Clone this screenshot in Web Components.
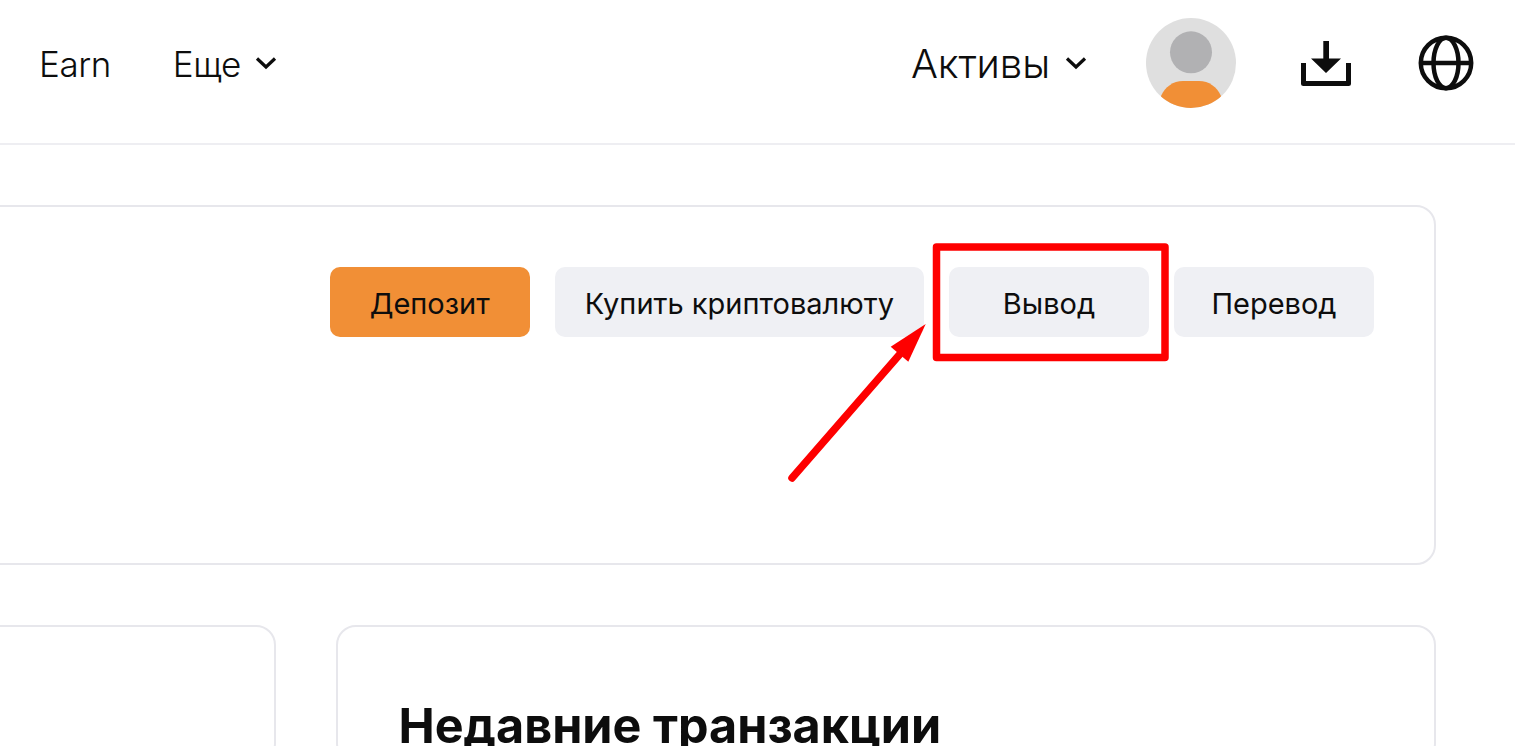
<!DOCTYPE html>
<html lang="ru">
<head>
<meta charset="utf-8">
<title>Вывод</title>
<style>
  html, body { margin: 0; height: 100%; overflow: hidden; background: #fff; }
  body { font-family: Inter, "Noto Sans", sans-serif; color: #0d0d0d; position: relative; }
</style>
</head>
<body>
<app-header>
  <nav-link slot="left" style="margin-right:62px">Earn</nav-link>
  <nav-link slot="left" chevron>Еще</nav-link>
  <nav-link slot="right" chevron large>Активы</nav-link>
  <user-avatar slot="right"></user-avatar>
  <download-icon slot="right"></download-icon>
  <globe-icon slot="right"></globe-icon>
</app-header>
<main-area>
  <panel-card class="top">
    <action-button primary>Депозит</action-button>
    <action-button>Купить криптовалюту</action-button>
    <action-button>Вывод</action-button>
    <action-button>Перевод</action-button>
  </panel-card>
  <two-cols>
    <panel-card></panel-card>
    <panel-card><h-title>Недавние транзакции</h-title></panel-card>
  </two-cols>
</main-area>
<red-annotation></red-annotation>

<script>
function define(name, html) {
  customElements.define(name, class extends HTMLElement {
    constructor() {
      super();
      this.attachShadow({ mode: "open" });
      this.shadowRoot.innerHTML = html;
    }
  });
}

define("app-header", `
  <style>
    :host { display: flex; justify-content: space-between; align-items: center; height: 125px; border-bottom: 2px solid #eeeef2; padding: 0 41px 18px 39px; }
    div { display: flex; align-items: center; }
  </style>
  <div><slot name="left"></slot></div>
  <div><slot name="right"></slot></div>
`);

define("nav-link", `
  <style>
    :host { display: flex; align-items: center; font-size: 35px; font-weight: 350; letter-spacing: -0.45px; line-height: 40px; padding-top: 2px; }
    :host([large]) { font-size: 40px; letter-spacing: -0.1px; margin-right: 59px; }
    svg { display: none; width: 22px; height: 14px; margin: -2px 0 0 14px; }
    :host([chevron]) svg { display: block; }
    :host([large]) svg { margin-left: 15px; }
  </style>
  <slot></slot>
  <svg viewBox="0 0 22 14" fill="none" stroke="#0d0d0d" stroke-width="3.2"><path d="M2 2.5 11 11 20 2.5"/></svg>
`);

define("user-avatar", `
  <style>
    :host { display: block; width: 90px; height: 90px; margin-right: 65px; }
    svg { display: block; }
  </style>
  <svg width="90" height="90" viewBox="0 0 90 90">
    <defs><clipPath id="c"><circle cx="45" cy="45" r="45"/></clipPath></defs>
    <circle cx="45" cy="45" r="45" fill="#dfdfdf"/>
    <circle cx="45" cy="34.3" r="21" fill="#b1b1b3"/>
    <path clip-path="url(#c)" d="M15 78C19 69 27 63 37 63H53C63 63 71 69 75 78V90H15Z" fill="#f18f36"/>
  </svg>
`);

define("download-icon", `
  <style>
    :host { display: block; width: 50px; height: 46px; margin: 2px 67px 0 0; }
    svg { display: block; }
  </style>
  <svg width="50" height="46" viewBox="0 0 50 46">
    <path d="M2.5 22V42.5H47.5V22" fill="none" stroke="#0d0d0d" stroke-width="5" stroke-linejoin="round"/>
    <path d="M22.3 0H28V17.5H40L25 32 10 17.5H22.3Z" fill="#0d0d0d"/>
  </svg>
`);

define("globe-icon", `
  <style>
    :host { display: block; width: 56px; height: 56px; }
    svg { display: block; }
  </style>
  <svg width="56" height="56" viewBox="0 0 56 56" fill="none" stroke="#0d0d0d" stroke-width="4.5">
    <circle cx="28" cy="28" r="25.2"/>
    <ellipse cx="28" cy="28" rx="12.5" ry="25.2"/>
    <path d="M3 28H53"/>
  </svg>
`);

define("main-area", `
  <style>
    :host { display: block; padding: 60px 79px 0 0; }
  </style>
  <slot></slot>
`);

define("panel-card", `
  <style>
    :host { display: flex; justify-content: flex-end; align-items: flex-start; gap: 25px; box-sizing: border-box; border: 2px solid #e7e7ec; border-radius: 20px; background: #fff; }
    :host(.top) { height: 360px; margin-left: -30px; padding: 60px 60px 0 0; }
  </style>
  <slot></slot>
`);

define("two-cols", `
  <style>
    :host { display: grid; grid-template-columns: 306px 1fr; column-gap: 60px; margin: 60px 0 0 -30px; height: 121px; overflow: hidden; }
  </style>
  <slot></slot>
`);

define("action-button", `
  <style>
    :host { display: flex; justify-content: center; align-items: center; box-sizing: border-box; min-width: 200px; height: 70px; padding: 2px 30px 0; border-radius: 10px; background: #eff0f4; font-size: 29px; color: #0d0d0d; white-space: nowrap; }
    :host([primary]) { background: #f18f36; }
  </style>
  <slot></slot>
`);

define("h-title", `
  <style>
    :host { display: block; flex: 1; padding: 64px 0 0 60.5px; font-size: 48.5px; font-weight: 700; line-height: 70px; white-space: nowrap; }
  </style>
  <slot></slot>
`);

define("red-annotation", `
  <style>
    :host { position: absolute; left: 0; top: 0; width: 1515px; height: 746px; pointer-events: none; }
    svg { display: block; }
  </style>
  <svg width="1515" height="746" viewBox="0 0 1515 746" fill="none">
    <rect x="936.5" y="247" width="228.5" height="110.5" stroke="#fe0000" stroke-width="7.5" stroke-linejoin="round"/>
    <path d="M792 478 900 354" stroke="#fe0000" stroke-width="7.5" stroke-linecap="round"/>
    <path d="M925.7 324 890.7 346.7 908.3 361.7Z" fill="#fe0000"/>
  </svg>
`);
</script>
</body>
</html>
